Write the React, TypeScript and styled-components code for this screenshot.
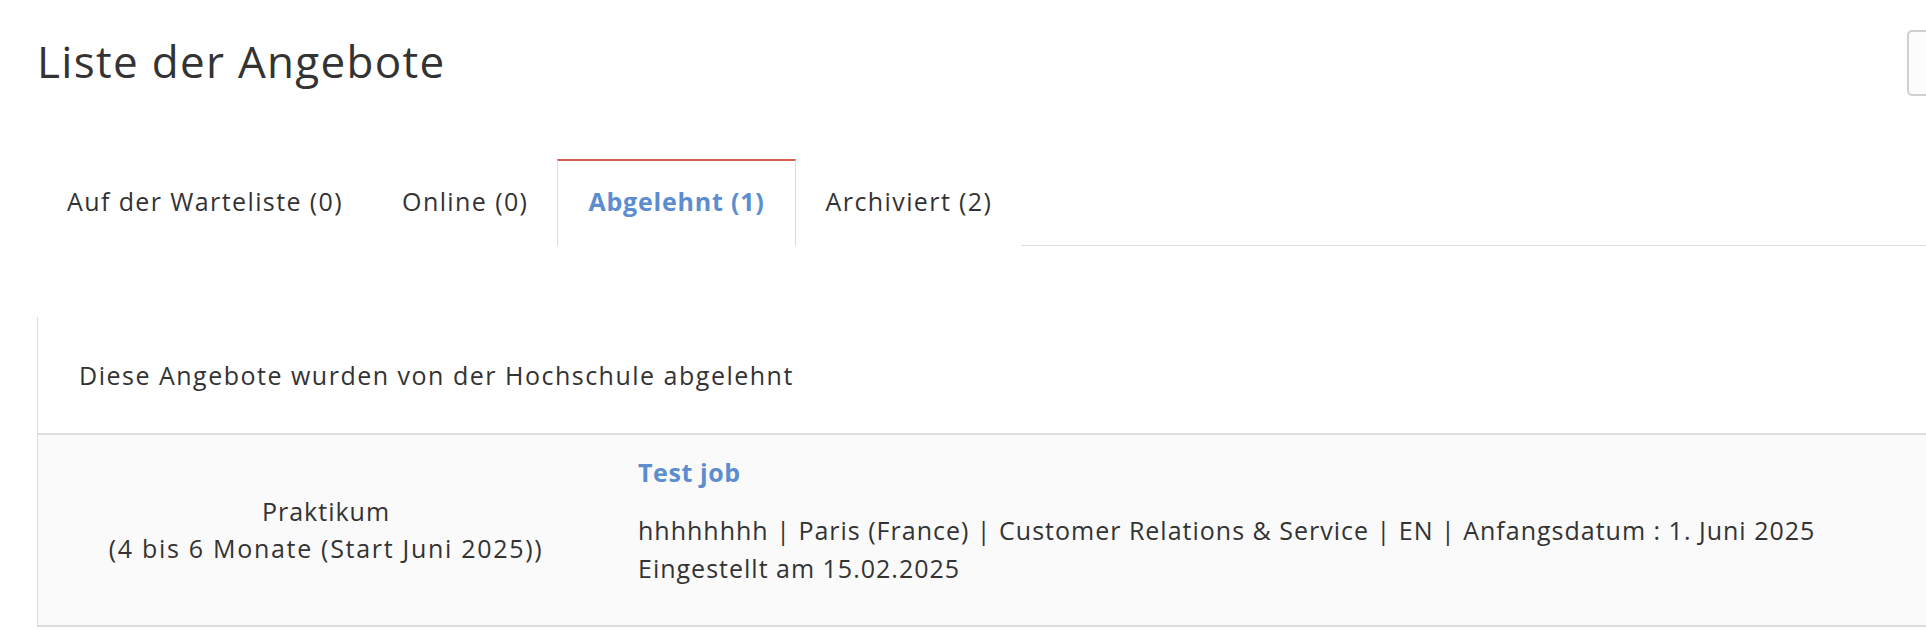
import React from 'react';
import styled, { createGlobalStyle } from 'styled-components';

const FONT = `'Open Sans', 'Liberation Sans', sans-serif`;

const GlobalStyle = createGlobalStyle`
  html, body {
    margin: 0;
    padding: 0;
    background: #fff;
    overflow: hidden;
  }
  body {
    font-family: ${FONT};
    color: #333;
  }
`;

const Page = styled.div`
  width: 1990px;
  padding: 28px 0 0 37px;
  font-family: ${FONT};
`;

const Header = styled.div`
  display: flex;
  justify-content: space-between;
  align-items: flex-start;
  height: 131px;
`;

const Title = styled.h1`
  margin: 9px 0 0;
  font-size: 44px;
  font-weight: 400;
  letter-spacing: 1.3px;
  line-height: 48px;
  color: #333;
`;

const ActionButton = styled.button`
  width: 120px;
  height: 66px;
  margin-top: 2px;
  border: 2px solid #cfcfcf;
  border-radius: 5px;
  background: #fcfcfc;
`;

const Tabs = styled.ul`
  display: flex;
  margin: 0;
  padding: 0;
  list-style: none;
  border-bottom: 1px solid #dcdcdc;
`;

const Tab = styled.li<{ $active?: boolean }>`
  display: flex;
  align-items: center;
  height: 87px;
  padding: ${(p) => (p.$active ? '0 30px 5px' : '0 28px 5px 29px')};
  box-sizing: border-box;
  margin-bottom: -1px;
  font-size: 25px;
  letter-spacing: ${(p) => (p.$active ? '0.8px' : '1.4px')};
  font-weight: ${(p) => (p.$active ? 700 : 400)};
  color: ${(p) => (p.$active ? '#5b8dcf' : '#333')};
  background: #fff;
  border: 1px solid ${(p) => (p.$active ? '#dcdcdc' : 'transparent')};
  border-top: 2px solid ${(p) => (p.$active ? '#d3604e' : 'transparent')};
  border-bottom-color: ${(p) => (p.$active ? '#fff' : 'transparent')};
  cursor: pointer;
`;

const Panel = styled.div`
  margin-top: 71px;
  border-left: 1px solid #dcdcdc;
  border-bottom: 2px solid #dcdcdc;
  font-size: 25px;
  letter-spacing: 1px;
`;

const PanelHeading = styled.div`
  display: flex;
  align-items: center;
  height: 116px;
  padding-left: 41px;
  letter-spacing: 1.5px;
  border-bottom: 2px solid #dcdcdc;
`;

const OfferRow = styled.div`
  display: grid;
  grid-template-columns: 576px 1fr;
  align-items: center;
  height: 190px;
  background: #fafafa;
`;

const TypeCell = styled.div`
  text-align: center;
  line-height: 37px;
`;

const TypeLine = styled.div<{ $wide?: boolean }>`
  letter-spacing: ${(p) => (p.$wide ? '1.7px' : '1px')};
`;

const OfferCell = styled.div`
  align-self: start;
  padding: 18px 0 0 24px;
  line-height: 38px;
`;

const OfferTitle = styled.a`
  display: block;
  margin-bottom: 20px;
  font-weight: 700;
  letter-spacing: 0.6px;
  color: #5b8dcf;
  text-decoration: none;
`;

const OfferMeta = styled.div``;

export default function App() {
  return (
    <>
      <GlobalStyle />
      <Page>
        <Header>
          <Title>Liste der Angebote</Title>
          <ActionButton />
        </Header>
        <Tabs>
          <Tab>Auf der Warteliste (0)</Tab>
          <Tab>Online (0)</Tab>
          <Tab $active>Abgelehnt (1)</Tab>
          <Tab>Archiviert (2)</Tab>
        </Tabs>
        <Panel>
          <PanelHeading>Diese Angebote wurden von der Hochschule abgelehnt</PanelHeading>
          <OfferRow>
            <TypeCell>
              <TypeLine>Praktikum</TypeLine>
              <TypeLine $wide>(4 bis 6 Monate (Start Juni 2025))</TypeLine>
            </TypeCell>
            <OfferCell>
              <OfferTitle href="#">Test job</OfferTitle>
              <OfferMeta>
                hhhhhhhh | Paris (France) | Customer Relations &amp; Service | EN | Anfangsdatum : 1. Juni 2025
              </OfferMeta>
              <OfferMeta>Eingestellt am 15.02.2025</OfferMeta>
            </OfferCell>
          </OfferRow>
        </Panel>
      </Page>
    </>
  );
}
